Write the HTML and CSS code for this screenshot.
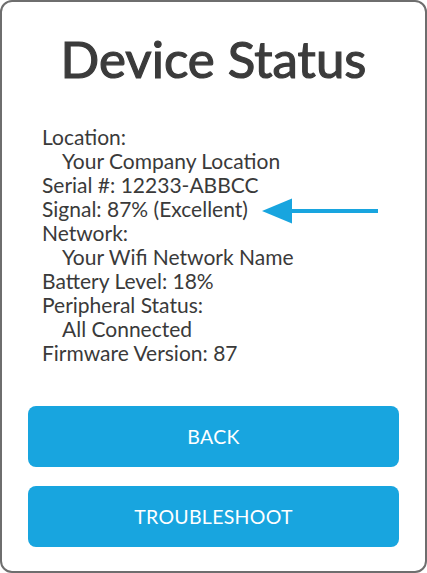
FILE: index.html
```html
<!doctype html>
<html lang="en">
<head>
    <meta charset="UTF-8">
    <meta name="viewport" content="width=device-width, initial-scale=1.0">
    <title>Device Status</title>
    <link rel="stylesheet" href="styles.css">
</head>
<body>
<div class="card">
    <h1 class="title">Device Status</h1>
    <ul class="info">
        <li>Location:</li>
        <li class="sub">Your Company Location</li>
        <li>Serial #: 12233-ABBCC</li>
        <li class="signal">
            <span>Signal: 87% (Excellent)</span>
            <svg class="arrow" width="116" height="24" viewBox="0 0 116 24">
                <polygon points="0,14 30,1.5 30,26.5" fill="#18a5df"/>
                <rect x="29" y="12" width="87" height="4" fill="#18a5df"/>
            </svg>
        </li>
        <li>Network:</li>
        <li class="sub">Your Wifi Network Name</li>
        <li>Battery Level: 18%</li>
        <li>Peripheral Status:</li>
        <li class="sub">All Connected</li>
        <li>Firmware Version: 87</li>
    </ul>
    <div class="buttons">
        <button class="btn">BACK</button>
        <button class="btn">TROUBLESHOOT</button>
    </div>
</div>
</body>
</html>
```

FILE: styles.css
```css
* {
    padding: 0;
    margin: 0;
    box-sizing: border-box;
}

ul {
    list-style: none;
}

html, body {
    width: 100%;
    height: 100%;
    background-color: #fff;
}

.card {
    width: 427px;
    height: 573px;
    border: 2px solid #6e6e6e;
    border-radius: 12px;
    display: flex;
    flex-direction: column;
    font-family: Lato, "Open Sans", sans-serif;
    color: #3a3a3a;
}

.title {
    margin-top: 26px;
    text-align: center;
    font-size: 51px;
    font-weight: 400;
    -webkit-text-stroke: 1.2px #3b3b3b;
    line-height: 62px;
    color: #3b3b3b;
}

.info {
    margin-top: 35px;
    padding-left: 40px;
    font-size: 21px;
    line-height: 24px;
}

.info .sub {
    padding-left: 20px;
}

.info .signal {
    display: flex;
    align-items: center;
}

.arrow {
    margin-left: 14px;
    overflow: visible;
}

.buttons {
    margin-top: 41px;
    padding: 0 26px;
    display: flex;
    flex-direction: column;
    gap: 19px;
}

.btn {
    height: 61px;
    border: none;
    border-radius: 8px;
    background-color: #18a5df;
    color: #fff;
    font-family: Lato, "Open Sans", sans-serif;
    font-size: 19.5px;
    letter-spacing: 0.3px;
}
```
